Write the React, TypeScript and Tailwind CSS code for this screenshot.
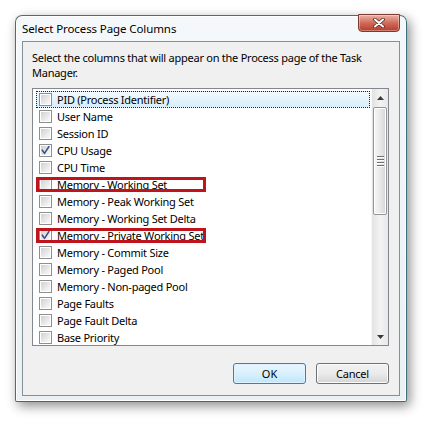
import React from "react";

const items: { label: string; checked: boolean; red?: boolean; selected?: boolean }[] = [
  { label: "PID (Process Identifier)", checked: false, selected: true },
  { label: "User Name", checked: false },
  { label: "Session ID", checked: false },
  { label: "CPU Usage", checked: true },
  { label: "CPU Time", checked: false },
  { label: "Memory - Working Set", checked: false, red: true },
  { label: "Memory - Peak Working Set", checked: false },
  { label: "Memory - Working Set Delta", checked: false },
  { label: "Memory - Private Working Set", checked: true, red: true },
  { label: "Memory - Commit Size", checked: false },
  { label: "Memory - Paged Pool", checked: false },
  { label: "Memory - Non-paged Pool", checked: false },
  { label: "Page Faults", checked: false },
  { label: "Page Fault Delta", checked: false },
  { label: "Base Priority", checked: false },
];

function CheckBox({ checked }: { checked: boolean }) {
  return (
    <div className="relative w-[13px] h-[13px] shrink-0 border border-[#8f8f8f] bg-white">
      <div className="absolute inset-[1px] bg-gradient-to-br from-[#d2d2d2] via-[#e6e6e6] to-[#fafafa]" />
      {checked && (
        <svg className="absolute inset-0" width="11" height="11" viewBox="0 0 11 11">
          <path d="M2.3 5.2 L4.5 8.4 L8.9 1.6" fill="none" stroke="#3b4f8f" strokeWidth="1.6" strokeLinecap="round" strokeLinejoin="round" />
        </svg>
      )}
    </div>
  );
}

function Arrow({ up }: { up?: boolean }) {
  return (
    <svg width="7" height="4" viewBox="0 0 7 4">
      {up ? <path d="M0 4 L3.5 0 L7 4 Z" fill="#3a3a3a" /> : <path d="M0 0 L3.5 4 L7 0 Z" fill="#3a3a3a" />}
    </svg>
  );
}

export default function App() {
  return (
    <div
      className="w-[426px] h-[422px] bg-white pt-[15px] pl-[15px] text-black"
      style={{ fontFamily: '"Noto Sans", "Open Sans", sans-serif' }}
    >
      <div className="relative w-[392px] h-[387px] rounded-t-[7px] rounded-b-[2px] border border-[#5d666c] border-r-[#3b6f7c] border-b-[#2f6f7f] bg-gradient-to-b from-[#f5f8fa] to-[#eaf0f3] shadow-[inset_0_0_0_1px_#ffffff,3px_4px_12px_rgba(0,0,0,0.45)] flex flex-col">
        {/* Title bar */}
        <div className="h-[25px] flex items-center pl-[6px] pt-[1px] text-[11.5px] tracking-[-0.1px] leading-none">
          Select Process Page Columns
        </div>
        {/* Close button */}
        <div className="absolute top-[-2px] right-[6px] w-[42px] h-[18px] rounded-b-[4px] border border-[#7a3a30] bg-gradient-to-b from-[#eab2a5] via-[#cf6a5a] to-[#b83a28] flex items-center justify-center shadow-[inset_0_0_0_1px_rgba(255,255,255,0.35)]">
          <svg width="12" height="10" viewBox="0 0 12 10">
            <path d="M2 1.5 L10 8.5 M10 1.5 L2 8.5" stroke="#5a2a22" strokeWidth="3.6" strokeLinecap="round" />
            <path d="M2 1.5 L10 8.5 M10 1.5 L2 8.5" stroke="#ffffff" strokeWidth="2" strokeLinecap="round" />
          </svg>
        </div>
        {/* Client */}
        <div className="mx-[6px] mb-[5px] flex-1 border border-[#878f96] bg-[#f0f0f0] flex flex-col">
          <p className="px-[9px] pt-[8px] text-[11px] tracking-[-0.25px] leading-[15px]">
            Select the columns that will appear on the Process page of the Task Manager.
          </p>
          <div className="ml-[9px] mr-[10px] mt-[8px] h-[258px] border border-[#828790] bg-white flex overflow-hidden">
            <div className="flex-1 pt-[2px]">
              {items.map((it) => (
                <div
                  key={it.label}
                  className={
                    "relative h-[17px] ml-[3px] mr-[1px] pl-[2px] flex items-center gap-[5px] border " +
                    (it.selected
                      ? "border-dotted border-[#222] bg-gradient-to-b from-[#f2f9fe] to-[#d6eefb]"
                      : "border-transparent")
                  }
                >
                  <CheckBox checked={it.checked} />
                  <span className="text-[11px] tracking-[-0.25px] leading-none whitespace-nowrap">{it.label}</span>
                  {it.red && (
                    <div className="absolute left-[-1px] top-[0px] w-[170px] h-[15px] border-[3px] border-[#c0141c]" />
                  )}
                </div>
              ))}
            </div>
            {/* Scrollbar */}
            <div className="w-[17px] flex flex-col bg-gradient-to-r from-[#e2e2e2] via-[#f3f3f3] to-[#e8e8e8] border-l border-[#f7f7f7]">
              <div className="h-[17px] flex items-center justify-center">
                <Arrow up />
              </div>
              <div className="mx-[1px] mt-[1px] h-[108px] rounded-[2px] border border-[#959595] bg-gradient-to-r from-[#f6f6f6] via-[#e9e9e9] to-[#d5d5d5] flex flex-col items-center justify-center shadow-[inset_0_0_0_1px_#ffffff]">
                <div className="w-[7px] h-[1px] bg-[#6e6e6e] shadow-[0_1px_0_#ffffff]" />
                <div className="w-[7px] h-[1px] bg-[#6e6e6e] shadow-[0_1px_0_#ffffff] mt-[2px]" />
                <div className="w-[7px] h-[1px] bg-[#6e6e6e] shadow-[0_1px_0_#ffffff] mt-[2px]" />
                <div className="w-[7px] h-[1px] bg-[#6e6e6e] shadow-[0_1px_0_#ffffff] mt-[2px]" />
              </div>
              <div className="flex-1" />
              <div className="h-[17px] flex items-center justify-center">
                <Arrow />
              </div>
            </div>
          </div>
          <div className="flex justify-end gap-[10px] pr-[10px] mt-[17px]">
            <button className="w-[73px] h-[21px] rounded-[3px] border border-[#3c7fb1] bg-gradient-to-b from-[#eaf6fd] via-[#d9f0fc] to-[#bee6fd] text-[11px] leading-none shadow-[inset_0_0_0_1px_#dff2fd]">
              OK
            </button>
            <button className="w-[73px] h-[21px] rounded-[3px] border border-[#707070] bg-gradient-to-b from-[#f2f2f2] via-[#ebebeb] to-[#d4d4d4] text-[11px] tracking-[-0.2px] leading-none shadow-[inset_0_0_0_1px_#fcfcfc]">
              Cancel
            </button>
          </div>
        </div>
      </div>
    </div>
  );
}
